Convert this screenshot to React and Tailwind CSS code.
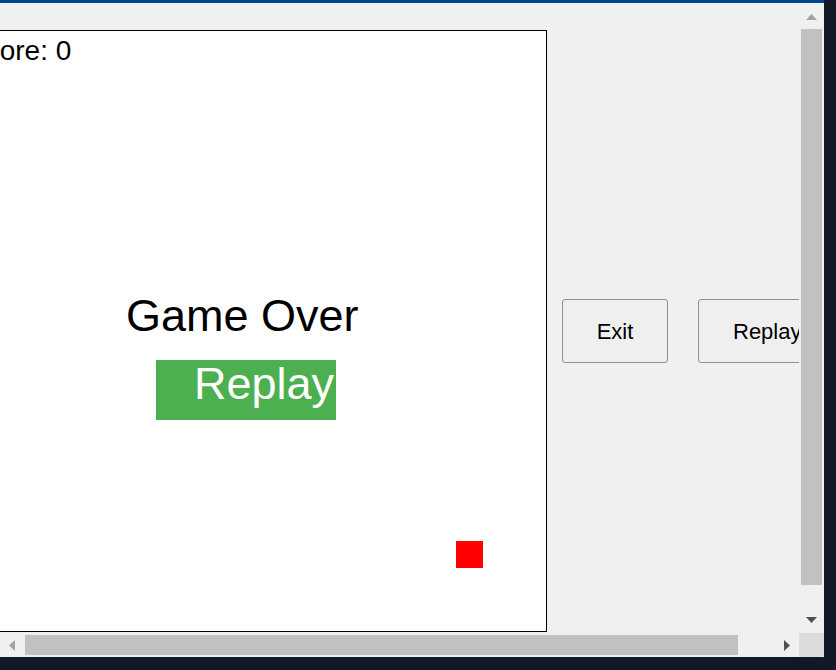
import React from 'react';

const Arrow = ({ dir, color }) => {
  // small scrollbar triangles
  if (dir === 'up') {
    return (
      <svg width="11" height="6" viewBox="0 0 11 6">
        <polygon points="0,6 5.5,0 11,6" fill={color} />
      </svg>
    );
  }
  if (dir === 'down') {
    return (
      <svg width="11" height="6" viewBox="0 0 11 6">
        <polygon points="0,0 11,0 5.5,6" fill={color} />
      </svg>
    );
  }
  if (dir === 'left') {
    return (
      <svg width="6" height="11" viewBox="0 0 6 11">
        <polygon points="6,0 6,11 0,5.5" fill={color} />
      </svg>
    );
  }
  return (
    <svg width="6" height="11" viewBox="0 0 6 11">
      <polygon points="0,0 6,5.5 0,11" fill={color} />
    </svg>
  );
};

const GameCanvas = () => (
  <div className="relative w-[602px] h-[602px] shrink-0 border border-black bg-white">
    {/* Score */}
    <div className="absolute left-[21px] top-[6px] text-[28px] leading-none text-black whitespace-nowrap">
      Score: 0
    </div>

    {/* Game over */}
    <div className="absolute left-[180px] top-[262px] text-[45px] leading-none text-black whitespace-nowrap">
      Game Over
    </div>

    {/* Replay box */}
    <div className="absolute left-[210px] top-[329px] w-[180px] h-[60px] bg-[#4caf50]"></div>
    <div className="absolute left-[248px] top-[330px] text-[45px] leading-none text-white whitespace-nowrap">
      Replay
    </div>

    {/* Food */}
    <div className="absolute left-[510px] top-[510px] w-[27px] h-[27px] bg-[#ff0000]"></div>
  </div>
);

const App = () => {
  return (
    <div className="w-[836px] h-[670px] bg-[#111827] overflow-hidden font-['Liberation_Sans',Arial,sans-serif]">
      <div className="w-[824px] h-[657px] flex flex-col bg-[#f0f0f0] border-t-[3px] border-[#00468c]">
        <div className="flex h-[630px]">
          {/* Page content, scrolled to the right */}
          <div className="w-[799px] h-full overflow-hidden">
            <div className="flex items-center w-max -ml-[55px] mt-[27px]">
              <GameCanvas />
              <div className="flex items-center gap-[30px] ml-[15px]">
                <button className="w-[106px] h-[64px] border border-[#8f8f8f] rounded-[3px] bg-[#efefef] text-[22px] text-black">
                  Exit
                </button>
                <button className="h-[64px] px-[34px] border border-[#8f8f8f] rounded-[3px] bg-[#efefef] text-[22px] text-black">
                  Replay
                </button>
              </div>
            </div>
          </div>

          {/* Vertical scrollbar */}
          <div className="w-[25px] h-full flex flex-col items-center bg-[#f0f0f0]">
            <div className="h-[26px] pt-[11px] flex justify-center">
              <Arrow dir="up" color="#a3a3a3" />
            </div>
            <div className="w-[21px] h-[556px] bg-[#c1c1c1]"></div>
            <div className="flex-1"></div>
            <div className="h-[26px] pt-[10px] flex justify-center">
              <Arrow dir="down" color="#505050" />
            </div>
          </div>
        </div>

        {/* Horizontal scrollbar */}
        <div className="flex h-[24px]">
          <div className="w-[799px] h-full flex items-center">
            <div className="w-[25px] h-full flex items-center pl-[9px]">
              <Arrow dir="left" color="#a3a3a3" />
            </div>
            <div className="w-[713px] h-[20px] bg-[#c1c1c1]"></div>
            <div className="flex-1 h-full flex items-center pl-[46px]">
              <Arrow dir="right" color="#505050" />
            </div>
          </div>
          <div className="w-[25px] h-full bg-[#dcdcdc] rounded-br-[3px]"></div>
        </div>
      </div>
    </div>
  );
};

export default App;
